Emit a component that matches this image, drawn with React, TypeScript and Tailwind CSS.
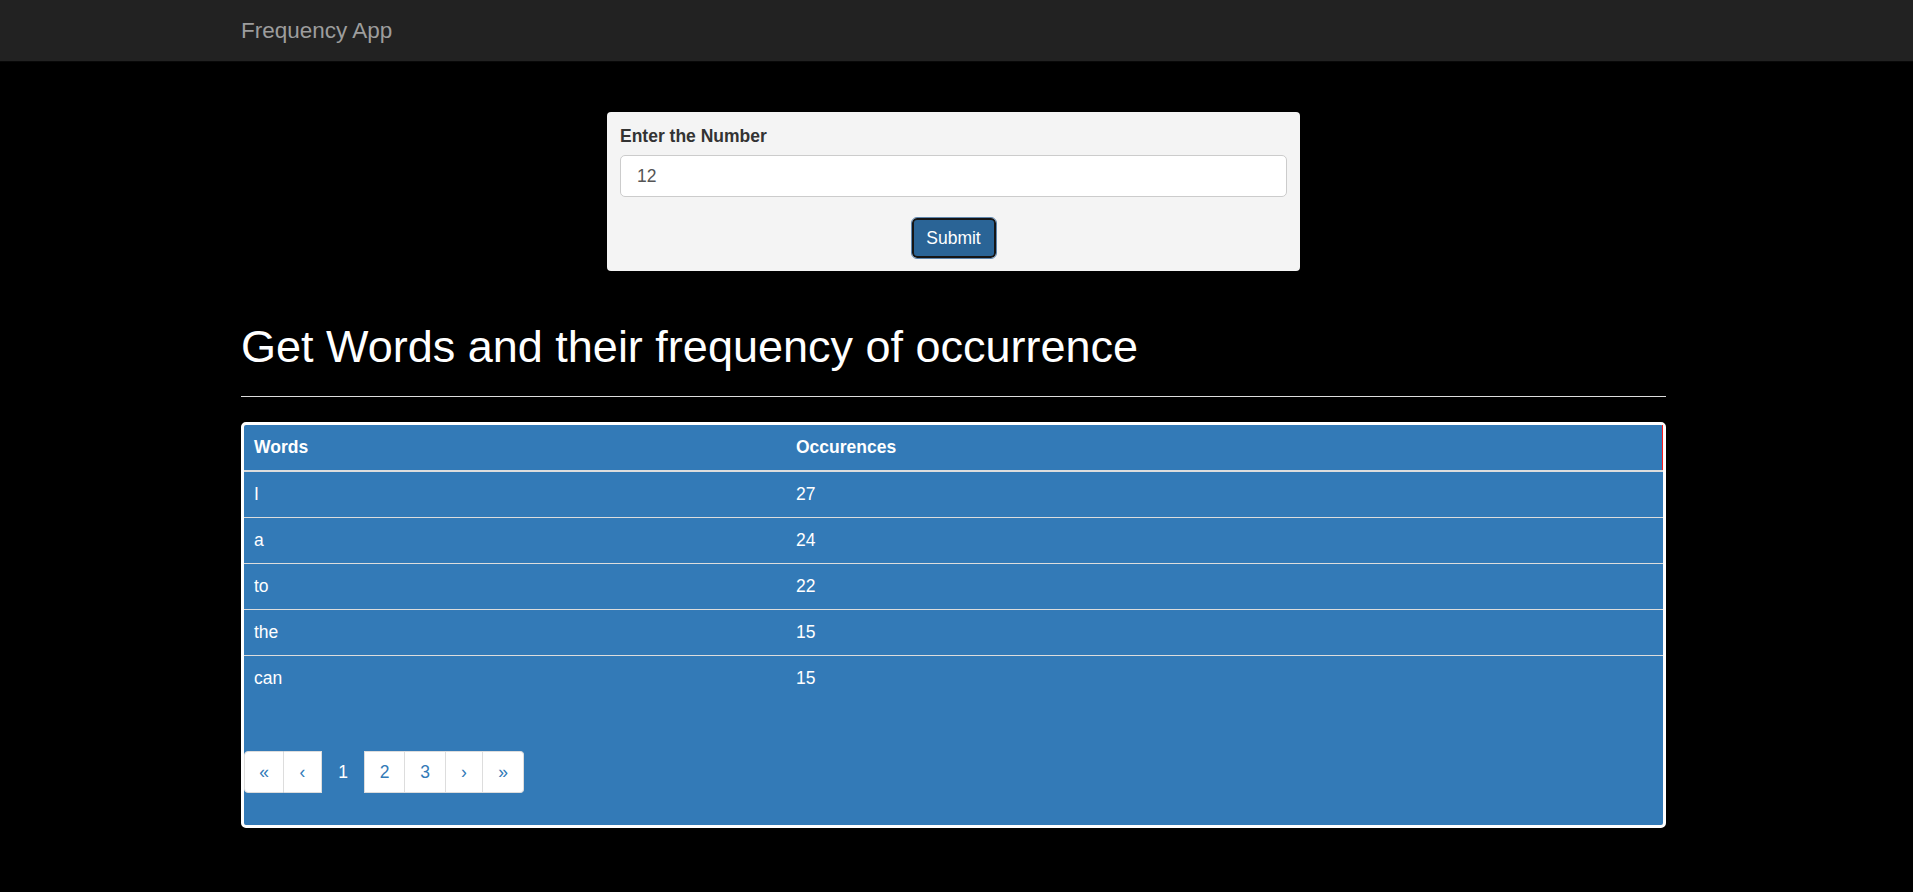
const rows = [
  { word: "I", count: 27 },
  { word: "a", count: 24 },
  { word: "to", count: 22 },
  { word: "the", count: 15 },
  { word: "can", count: 15 },
];

const pages = [
  { label: "«", cls: "w-[40px] border-l rounded-l-[4px]", active: false },
  { label: "‹", cls: "w-[38px]", active: false },
  { label: "1", cls: "w-[42px]", active: true },
  { label: "2", cls: "w-[41px] border-l", active: false },
  { label: "3", cls: "w-[41px]", active: false },
  { label: "›", cls: "w-[37px]", active: false },
  { label: "»", cls: "w-[41px] rounded-r-[4px]", active: false },
];

const Navbar = () => (
  <nav className="h-[62px] bg-[#222222] border-b border-[#080808] flex items-center">
    <div className="ml-[241px] text-[22.5px] text-[#9d9d9d]">Frequency App</div>
  </nav>
);

const NumberForm = () => (
  <div className="mx-auto w-[693px] mt-[50px] bg-[#f4f4f4] rounded-[4px] px-[13px] pt-[12px] pb-[13px]">
    <label className="block font-bold text-[17.5px] leading-[24px] text-[#333333] mb-[7px]">
      Enter the Number
    </label>
    <input
      type="text"
      defaultValue="12"
      className="block w-full h-[42px] bg-white border border-[#cccccc] rounded-[5px] pl-[16px] text-[17.5px] text-[#555555] outline-none"
    />
    <div className="flex justify-center mt-[21px]">
      <button className="w-[84px] h-[40px] bg-[#2a6496] text-white text-[17.5px] rounded-[5px] border-2 border-[#151515] outline outline-1 outline-[#5f86ad]">
        Submit
      </button>
    </div>
  </div>
);

const WordsTable = () => (
  <div className="mt-[25px] border-[3px] border-white rounded-[5px] bg-[#337ab7] text-white text-[17.5px] leading-[25px]">
    <table className="w-full border-collapse">
      <thead>
        <tr>
          <th className="w-[542px] text-left font-bold px-[10px] py-[10px] border-b-2 border-[#dddddd]">Words</th>
          <th className="text-left font-bold px-[10px] py-[10px] border-b-2 border-[#dddddd] border-r border-r-[#ff1a1a]">
            Occurences
          </th>
        </tr>
      </thead>
      <tbody>
        {rows.map((r, i) => (
          <tr key={r.word} className={i > 0 ? "border-t border-[#dddddd]" : ""}>
            <td className="px-[10px] py-[10px]">{r.word}</td>
            <td className="px-[10px] py-[10px]">{r.count}</td>
          </tr>
        ))}
      </tbody>
    </table>
    <div className="flex mt-[50px] mb-[32px]">
      {pages.map((p, i) => (
        <span
          key={i}
          className={
            p.active
              ? `${p.cls} h-[42px] flex items-center justify-center text-white`
              : `${p.cls} h-[42px] flex items-center justify-center bg-white text-[#337ab7] border-y border-r border-[#dddddd]`
          }
        >
          {p.label}
        </span>
      ))}
    </div>
  </div>
);

export default function App() {
  return (
    <div className="min-h-[892px] bg-black" style={{ fontFamily: '"Liberation Sans", Arial, sans-serif' }}>
      <Navbar />
      <div className="ml-[241px] w-[1425px]">
        <NumberForm />
        <h1 className="mt-[52px] text-[45px] leading-[48px] text-white font-normal">
          Get Words and their frequency of occurrence
        </h1>
        <hr className="mt-[25px] border-0 border-t border-[#dddddd]" />
        <WordsTable />
      </div>
    </div>
  );
}
